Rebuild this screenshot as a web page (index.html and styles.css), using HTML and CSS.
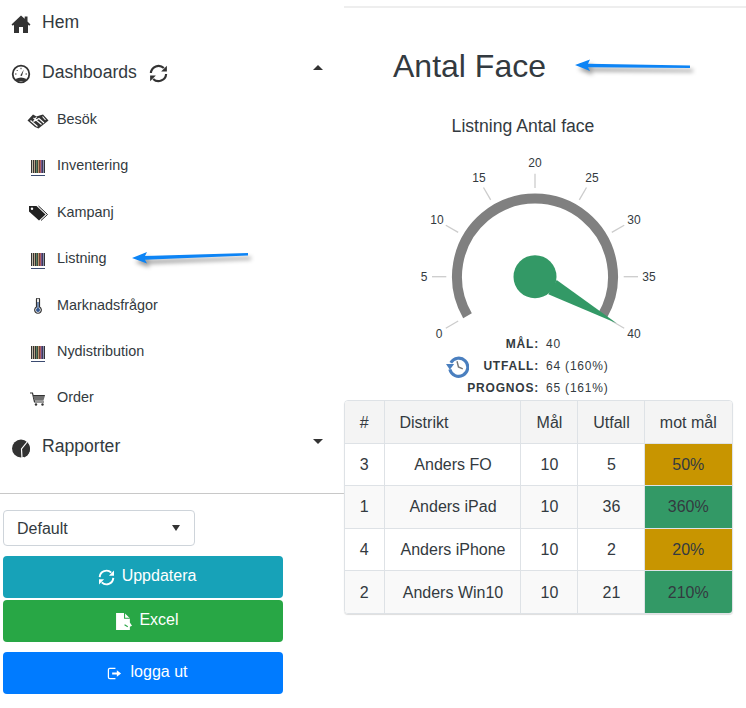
FILE: index.html
```html
<!DOCTYPE html>
<html lang="sv">
<head>
<meta charset="utf-8">
<title>Antal Face</title>
<link rel="stylesheet" href="styles.css">
</head>
<body>
<svg class="defs" width="0" height="0" aria-hidden="true">
  <symbol id="sync" viewBox="0 0 20 20">
    <path d="M2 9.500A8 8 0 0 1 15.600 4.300" fill="none" stroke="currentColor" stroke-width="2.300"/>
    <path d="M18 10.500A8 8 0 0 1 4.400 15.700" fill="none" stroke="currentColor" stroke-width="2.300"/>
    <path d="M18.800 1.800V7.800H12.800Z" fill="currentColor"/>
    <path d="M1.200 18.200V12.200H7.200Z" fill="currentColor"/>
  </symbol>
  <symbol id="barcode" viewBox="0 0 14 16" shape-rendering="crispEdges">
    <path d="M0 0h1v13H0z" fill="#333"/><path d="M1 0h1v13H1z" fill="#c4bcac"/><path d="M2 0h1v13H2z" fill="#333"/>
    <path d="M3 0h1v13H3z" fill="#b8a488"/><path d="M4 0h1v13H4z" fill="#333"/><path d="M5 0h1v13H5z" fill="#5f8566"/>
    <path d="M6 0h1v13H6z" fill="#3c4a3c"/><path d="M7 0h1v13H7z" fill="#c09470"/><path d="M8 0h1v13H8z" fill="#6b4438"/>
    <path d="M9 0h1v13H9z" fill="#b06060"/><path d="M10 0h1v13H10z" fill="#70558f"/><path d="M11 0h1v13H11z" fill="#3c3b55"/>
    <path d="M12 0h1v13H12z" fill="#8a90b0"/><path d="M13 0h1v13H13z" fill="#333"/>
    <path d="M0 14.500h14v1H0z" fill="#3a4a70"/>
  </symbol>
</svg>

<div class="page">
  <aside class="sidebar">
    <nav class="nav">
      <a class="top-item">
        <svg class="top-icon" viewBox="0 0 20 20"><path d="M10 1.500 0.500 10.500l1.300 1.300L3 10.800V19h5v-6h4v6h5v-8.200l1.200 1 1.300-1.300L16.500 7.500V2.500h-2.800v2.300Z" fill="#333"/></svg>
        <span>Hem</span>
      </a>
      <a class="top-item top-gap">
        <svg class="top-icon" viewBox="0 0 20 20">
          <circle cx="10" cy="10" r="8.300" fill="none" stroke="#333" stroke-width="1.800"/>
          <path d="M4.500 15Q10 12 15.500 15L14 17H6Z" fill="#333"/>
          <path d="M9.300 11.500 12.800 5.500 10.900 12.100Z" fill="#333"/>
          <path d="M4 10h1.500M5.700 6l1 1M10 3.800v1.400M14.500 10H16" stroke="#333" stroke-width="1"/>
        </svg>
        <span>Dashboards</span>
        <svg class="sync-icon"><use href="#sync"/></svg>
        <i class="caret caret-up"></i>
      </a>
      <ul class="sub">
        <li><svg class="sub-icon" viewBox="0 0 22 16"><path d="M0.500 7.500 6 1.500 9.500 3.500 12.500 2.500 16 1.500 21.500 7.500 11.500 15.500 8 14Z" fill="#333"/><path d="M3.500 7.500 10.500 13.500M6.500 5 14.500 11.500M9.500 4 6.500 8.500 12 5.500 17 10M15.500 3.500 18.500 7" fill="none" stroke="#fff" stroke-width="1.100"/></svg><span>Besök</span></li>
        <li><svg class="sub-icon bar"><use href="#barcode"/></svg><span>Inventering</span></li>
        <li><svg class="sub-icon" viewBox="0 0 20 16"><path d="M1 1h7.500L17.500 9.500 11 15.500 1 6.500Z" fill="#222"/><path d="M10.500 1 19.500 9.500 13 15.500" fill="none" stroke="#222" stroke-width="1"/><circle cx="4" cy="3.800" r="1.200" fill="#fff"/></svg><span>Kampanj</span></li>
        <li><svg class="sub-icon bar"><use href="#barcode"/></svg><span>Listning</span></li>
        <li><svg class="sub-icon" viewBox="0 0 20 16"><path d="M8.500 1.500a1.500 1.500 0 0 1 3 0V9a3.300 3.300 0 1 1-3 0Z" fill="#fff" stroke="#333" stroke-width="1.200"/><circle cx="10" cy="12" r="2" fill="#35588f"/><path d="M10 4v7" stroke="#35588f" stroke-width="1.300"/></svg><span>Marknadsfrågor</span></li>
        <li><svg class="sub-icon bar"><use href="#barcode"/></svg><span>Nydistribution</span></li>
        <li><svg class="sub-icon" viewBox="0 0 20 16"><path d="M2 2h2.500l2 9H16" fill="none" stroke="#333" stroke-width="1.200"/><path d="M5 4h12l-1.500 5.500H6.200Z" fill="#333"/><path d="M5.500 6h11M6 8h10" stroke="#fff" stroke-width=".6"/><circle cx="8" cy="13.500" r="1.200" fill="#333"/><circle cx="14.500" cy="13.500" r="1.200" fill="#333"/></svg><span>Order</span></li>
      </ul>
      <a class="top-item report-item">
        <svg class="top-icon" viewBox="0 0 20 20"><circle cx="10" cy="10.500" r="9" fill="#333"/><path d="M16.500 3.500 10.500 11 11 20" fill="none" stroke="#fff" stroke-width="1.200"/><path d="M13 19.500 11.800 11.500 17 5.500A9 9 0 0 1 13 19.500Z" fill="#333"/></svg>
        <span>Rapporter</span>
        <i class="caret caret-down"></i>
      </a>
    </nav>
    <div class="controls">
      <div class="picker"><span>Default</span><i class="caret caret-small"></i></div>
      <a class="btn btn-info"><svg class="btn-icon"><use href="#sync"/></svg><span>Uppdatera</span></a>
      <a class="btn btn-success"><svg class="btn-icon" viewBox="0 0 16 16"><path d="M1 0h8l5 5v4l2 3-2 1v3H1Z" fill="#fff"/><path d="M9 0v5h5M9 11l3 2" fill="none" stroke="#28a745" stroke-width="1"/></svg><span>Excel</span></a>
      <a class="btn btn-primary btn-logout"><svg class="btn-icon small" viewBox="0 0 16 16"><path d="M9 2.500H3a1.500 1.500 0 0 0-1.500 1.500v8A1.500 1.500 0 0 0 3 13.500h6" fill="none" stroke="#fff" stroke-width="1.300"/><path d="M5.500 7h5V4.500L15 8l-4.500 3.500V9h-5Z" fill="#fff"/></svg><span>logga ut</span></a>
    </div>
  </aside>

  <main class="main">
    <h1 class="title">Antal Face</h1>
    <h2 class="subtitle">Listning Antal face</h2>
    <svg class="gauge" viewBox="0 0 240 183" width="240" height="183">
      <g stroke="#ccc" stroke-width="1.300">
        <line x1="120" y1="23.700" x2="120" y2="38"/>
        <line x1="68.500" y1="37.500" x2="75.700" y2="49.900"/>
        <line x1="30.800" y1="75.200" x2="43.200" y2="82.400"/>
        <line x1="17" y1="126.700" x2="31.300" y2="126.700"/>
        <line x1="30.800" y1="178.200" x2="43.200" y2="171"/>
        <line x1="171.500" y1="37.500" x2="164.300" y2="49.900"/>
        <line x1="209.200" y1="75.200" x2="196.800" y2="82.400"/>
        <line x1="223" y1="126.700" x2="208.700" y2="126.700"/>
        <line x1="209.200" y1="178.200" x2="196.800" y2="171"/>
      </g>
      <path d="M52.500 165.700A78 78 0 1 1 187.500 165.700" fill="none" stroke="#808080" stroke-width="10"/>
      <circle cx="120" cy="126.700" r="21.500" fill="#339966"/>
      <path d="M141.700 130 201.700 173.300 133.300 144.300Z" fill="#339966"/>
      <g class="gauge-label" text-anchor="middle">
        <text x="24" y="188">0</text>
        <text x="9" y="131">5</text>
        <text x="22" y="74">10</text>
        <text x="64" y="32">15</text>
        <text x="120" y="17">20</text>
        <text x="177" y="32">25</text>
        <text x="219" y="74">30</text>
        <text x="234" y="131">35</text>
        <text x="219" y="188">40</text>
      </g>
    </svg>
    <div class="stats">
      <div class="stat"><b>MÅL:</b><span>40</span></div>
      <div class="stat">
        <b class="with-icon">
          <svg class="history" viewBox="0 0 24 24"><path d="M5 8A9.500 9.500 0 1 1 4 15" fill="none" stroke="#4a7fbf" stroke-width="3.200"/><path d="M0 9.500h8.500L4 15.500Z" fill="#4a7fbf"/><path d="M11.500 6.500 13 12.500l4.500 2" fill="none" stroke="#777" stroke-width="1.500"/></svg>
          UTFALL:
        </b>
        <span>64 (160%)</span>
      </div>
      <div class="stat"><b>PROGNOS:</b><span>65 (161%)</span></div>
    </div>
    <div class="table-card">
      <table class="data">
        <colgroup><col class="c1"><col class="c2"><col class="c3"><col class="c4"><col class="c5"></colgroup>
        <thead>
          <tr><th>#</th><th class="left">Distrikt</th><th>Mål</th><th>Utfall</th><th>mot mål</th></tr>
        </thead>
        <tbody>
          <tr><td>3</td><td>Anders FO</td><td>10</td><td>5</td><td class="amber">50%</td></tr>
          <tr><td>1</td><td>Anders iPad</td><td>10</td><td>36</td><td class="green">360%</td></tr>
          <tr><td>4</td><td>Anders iPhone</td><td>10</td><td>2</td><td class="amber">20%</td></tr>
          <tr><td>2</td><td>Anders Win10</td><td>10</td><td>21</td><td class="green">210%</td></tr>
        </tbody>
      </table>
    </div>
  </main>
</div>

<svg class="arrow arrow-title" viewBox="0 0 130 20" width="130" height="20"><path d="M1 7 16 1.500 14 5.800 116 7.500V10L14 9.300 16 13Z" fill="#0d84f5"/></svg>
<svg class="arrow arrow-nav" viewBox="0 0 130 20" width="130" height="20"><path d="M1 10 16 4 14 8 117 5V7.500L14 11.800 16 15.500Z" fill="#0d84f5"/></svg>
</body>
</html>
```
FILE: styles.css
```css
* { box-sizing: border-box; }
html, body { margin: 0; padding: 0; background: #fff; }
body {
  position: relative;
  width: 746px;
  height: 708px;
  overflow: hidden;
  font-family: "Liberation Sans", Arial, sans-serif;
  color: #333a40;
  font-size: 16px;
}
.defs { position: absolute; }
.page { display: flex; align-items: flex-start; }

/* Sidebar */
.sidebar { width: 344px; flex: none; }
.top-item {
  display: flex;
  align-items: center;
  height: 44px;
  padding: 0 21px 0 11px;
  font-size: 17.6px;
}
.top-icon { width: 20px; height: 20px; flex: none; margin-right: 11px; margin-top: 3px; }
.top-gap { margin-top: 6px; }
.report-item { margin-top: 4px; }
.sync-icon { width: 19px; height: 19px; margin-left: 12px; margin-top: 2px; color: #333; }
.caret { display: block; width: 0; height: 0; border-left: 5px solid transparent; border-right: 5px solid transparent; }
.caret-up { margin-left: auto; margin-top: -10px; border-bottom: 5px solid #333; }
.caret-down { margin-left: auto; margin-top: -11px; border-top: 5px solid #333; }
.sub { list-style: none; margin: 1.850px 0 0; padding: 0; }
.sub li {
  display: flex;
  align-items: center;
  height: 46.400px;
  padding-left: 27px;
  font-size: 14.400px;
}
.sub-icon { width: 22px; height: 16px; margin-right: 8px; margin-top: 3px; flex: none; }
.sub-icon.bar { width: 14px; height: 16px; margin-left: 4px; margin-right: 12px; margin-top: 6px; }

.controls {
  margin-top: 24.150px;
  border-top: 1px solid #c8c8c8;
  padding: 16px 61px 0 3px;
  display: flex;
  flex-direction: column;
}
.picker {
  width: 192px;
  height: 36px;
  border: 1px solid #ced4da;
  border-radius: 4px;
  display: flex;
  align-items: center;
  justify-content: space-between;
  padding: 0 14px 0 13px;
  margin-bottom: 10px;
}
.picker span { position: relative; top: 1px; }
.caret-small { border-top: 6px solid #333; border-left-width: 4px; border-right-width: 4px; }
.btn {
  height: 42px;
  border-radius: 4px;
  color: #fff;
  display: flex;
  align-items: center;
  justify-content: center;
  gap: 7px;
  margin-bottom: 2px;
  padding: 0 0 2px 8px;
}
.btn-info { background: #17a2b8; }
.btn-success { background: #28a745; }
.btn-primary { background: #007bff; }
.btn-logout { margin-top: 8px; gap: 9px; }
.btn-icon { width: 17px; height: 17px; margin-top: 4px; }
.btn-icon.small { width: 15px; height: 15px; }

/* Main */
.main { flex: 1; min-width: 0; border-top: 2px solid #eee; margin-top: 6px; }
.title { margin: 39px 0 0 49px; font-size: 32px; line-height: 38.400px; font-weight: 400; }
.subtitle {
  width: 358px;
  margin: 31px 0 0;
  font-size: 17.600px;
  line-height: 21px;
  font-weight: 400;
  text-align: center;
}
.gauge { display: block; margin: 13px 0 0 71px; overflow: visible; }
.gauge-label { font-size: 12px; fill: #333a40; }
.stats { margin-top: 0; font-size: 12px; letter-spacing: .8px; }
.stat {
  display: grid;
  grid-template-columns: 195px 1fr;
  column-gap: 7px;
  height: 22px;
  align-items: center;
}
.stat b { text-align: right; }
.with-icon { position: relative; }
.history { position: absolute; left: 102px; top: -4px; width: 23px; height: 23px; }
.table-card {
  width: 389px;
  margin-top: 1px;
  border-radius: 4px;
  border: 1px solid #dee2e6;
  box-shadow: 0 1px 1px #ddd;
  overflow: hidden;
}
.data { width: 100%; border-collapse: collapse; table-layout: fixed; }
.c1 { width: 39px; }
.c2 { width: 136px; }
.c3 { width: 57px; }
.c4 { width: 67px; }
.c5 { width: 88px; }
.data th, .data td {
  padding: 1px 0 0 2px;
  border: 1px solid #dee2e6;
  text-align: center;
  font-weight: 400;
}
.data th { height: 42px; }
.data td { height: 42.400px; }
.data tr > :first-child { border-left: 0; padding-left: 0; }
.data tr > :last-child { border-right: 0; padding-left: 0; }
.data thead th { border-top: 0; background: #f4f4f4; }
.data tbody tr:last-child td { border-bottom: 0; }
.data tbody tr:nth-child(even) td { background: #f9f9f9; }
.data th.left { text-align: left; padding-left: 15px; }
.data td.amber { background: #c89500; }
.data tbody tr td.green { background: #339966; }

/* Annotation arrows */
.arrow { position: absolute; filter: drop-shadow(3px 4px 2px rgba(0,0,0,.4)); }
.arrow-title { left: 574px; top: 58px; }
.arrow-nav { left: 131px; top: 248px; }
```
